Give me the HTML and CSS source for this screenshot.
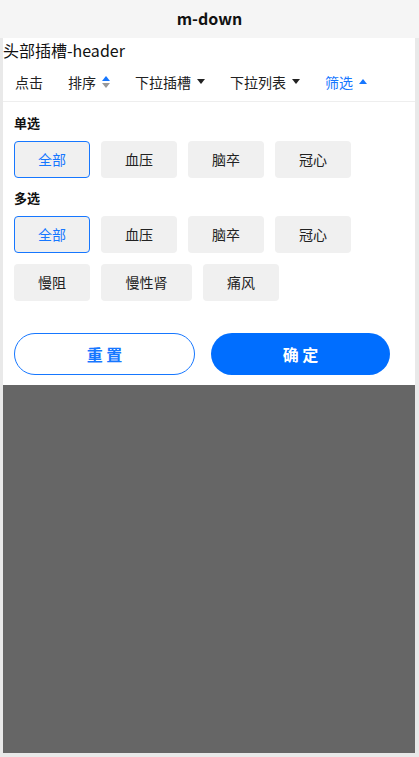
FILE: index.html
```html
<!DOCTYPE html>
<html>
<head>
  <title>m-down</title>
  <link rel="stylesheet" href="styles.css">
</head>
<body>
  <div class="screen">
    <div class="nav-title">m-down</div>
    <div class="slot-header">头部插槽-header</div>

    <div class="tabs">
      <div class="tab">点击</div>
      <div class="tab">排序
        <span class="sort">
          <span class="tri up blue"></span>
          <span class="tri down gray"></span>
        </span>
      </div>
      <div class="tab">下拉插槽 <span class="tri down dark"></span></div>
      <div class="tab">下拉列表 <span class="tri down dark"></span></div>
      <div class="tab active">筛选 <span class="tri up blue"></span></div>
    </div>

    <div class="panel">
      <div class="group">
        <div class="label">单选</div>
        <div class="options">
          <div class="opt selected">全部</div>
          <div class="opt">血压</div>
          <div class="opt">脑卒</div>
          <div class="opt">冠心</div>
        </div>
      </div>
      <div class="group">
        <div class="label">多选</div>
        <div class="options">
          <div class="opt selected">全部</div>
          <div class="opt">血压</div>
          <div class="opt">脑卒</div>
          <div class="opt">冠心</div>
          <div class="opt">慢阻</div>
          <div class="opt wide">慢性肾</div>
          <div class="opt">痛风</div>
        </div>
      </div>
      <div class="actions">
        <div class="btn reset">重 置</div>
        <div class="btn confirm">确 定</div>
      </div>
    </div>

    <div class="mask"></div>
  </div>
</body>
</html>
```

FILE: styles.css
```css
body {
  margin: 0;
  background-color: #e9e9e9;
  font-family: "Noto Sans CJK SC", "Noto Sans", sans-serif;
  color: #111;
}

.screen {
  margin: 0 4px 4px 3px;
  height: 753px;
  background-color: #fff;
  display: flex;
  flex-direction: column;
}

.nav-title {
  height: 38px;
  line-height: 36px;
  background-color: #f5f5f5;
  text-align: center;
  font-size: 16px;
  font-weight: bold;
  margin: 0 -4px 0 -3px;
}

.slot-header {
  height: 24px;
  line-height: 24px;
  font-size: 16px;
}

.tabs {
  height: 39px;
  display: flex;
  align-items: center;
  gap: 25px;
  padding-left: 12px;
  border-bottom: 1px solid #eee;
  font-size: 14px;
}

.tab {
  display: flex;
  align-items: center;
  gap: 6px;
  color: #222;
}

.tab.active {
  color: #1677ff;
}

.sort {
  display: flex;
  flex-direction: column;
  gap: 2px;
}

.tri {
  display: inline-block;
  width: 0;
  height: 0;
  border-left: 4px solid transparent;
  border-right: 4px solid transparent;
}

.tri.up { border-bottom: 5px solid; }
.tri.down { border-top: 5px solid; }
.tri.blue { border-bottom-color: #1677ff; }
.tri.gray { border-top-color: #999; }
.tri.dark { border-top-color: #222; }

.panel {
  padding: 11px 11px 10px;
}

.group + .group {
  margin-top: 10px;
}

.label {
  height: 20px;
  line-height: 20px;
  font-size: 13px;
  font-weight: bold;
}

.options {
  margin-top: 8px;
  display: flex;
  flex-wrap: wrap;
  gap: 11px;
}

.opt {
  width: 76px;
  height: 37px;
  box-sizing: border-box;
  line-height: 37px;
  text-align: center;
  font-size: 14px;
  background-color: #f0f0f0;
  border-radius: 4px;
  color: #222;
}

.opt.wide {
  width: 91px;
}

.opt.selected {
  border: 1px solid #1677ff;
  line-height: 35px;
  color: #1677ff;
}

.actions {
  margin-top: 32px;
  display: flex;
  gap: 16px;
}

.btn {
  height: 42px;
  box-sizing: border-box;
  line-height: 42px;
  border-radius: 21px;
  text-align: center;
  font-size: 16px;
  font-weight: bold;
}

.btn.reset {
  width: 181px;
  border: 1px solid #1677ff;
  line-height: 40px;
  color: #1677ff;
}

.btn.confirm {
  width: 179px;
  background-color: #006eff;
  color: #fff;
}

.mask {
  flex: 1;
  background-color: #666;
}
```
